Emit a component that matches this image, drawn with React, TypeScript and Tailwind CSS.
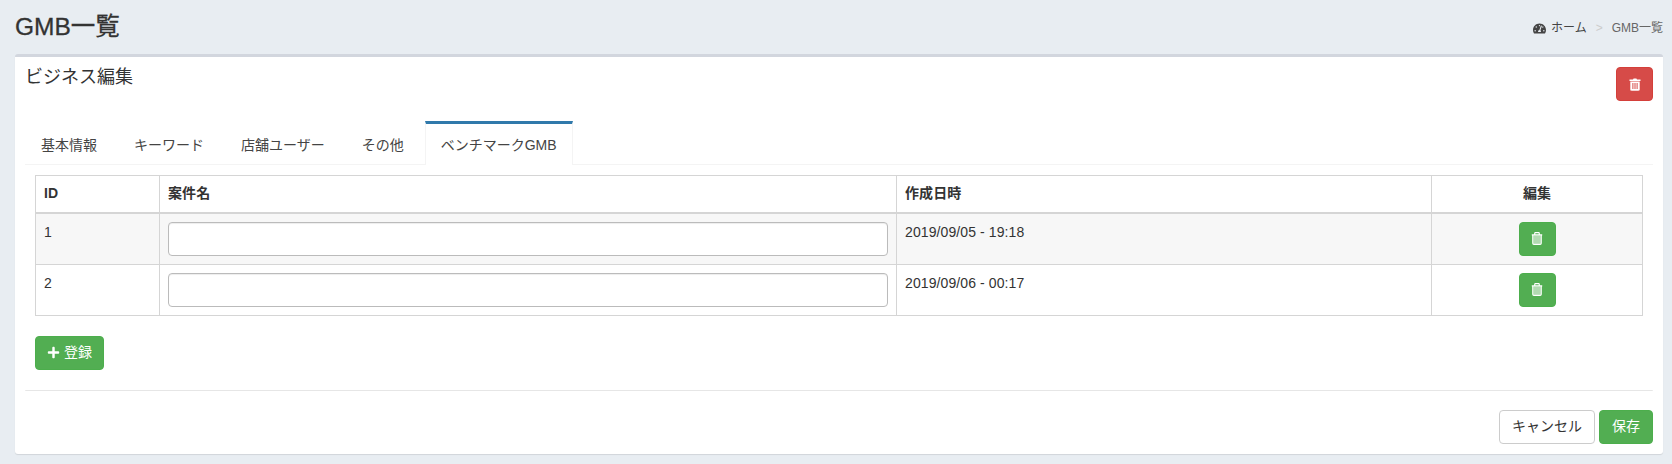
import React from "react";
import { FaPlus, FaTachometerAlt } from "react-icons/fa";

// solid trash used on the top delete button
const TrashSolid = () => (
  <svg width="12" height="13" viewBox="0 0 12 14" preserveAspectRatio="none" className="block">
    <path d="M4 1.6 4.6.5h2.8L8 1.6h3.5v1.5H.5V1.6z" fill="#fff" />
    <path fillRule="evenodd" d="M1.3 3.8h9.4v8.6c0 .8-.6 1.3-1.3 1.3H2.6c-.7 0-1.3-.5-1.3-1.3zM3.4 5.4v6.4h1V5.4zM5.5 5.4v6.4h1V5.4zM7.6 5.4v6.4h1V5.4z" fill="#fff" />
  </svg>
);

// outlined trash with translucent body used in the table rows
const TrashOutline = () => (
  <svg width="11" height="13" viewBox="0 0 10 12" className="block -translate-x-[0.5px]">
    <rect x="1.5" y="3" width="7" height="8" fill="#fff" fillOpacity="0.55" />
    <path d="M0 2.6h10M2.9 2.4V1.3c0-.4.3-.7.7-.7h2.8c.4 0 .7.3.7.7v1.1M1.1 2.8v7.6c0 .6.4 1 1 1h5.8c.6 0 1-.4 1-1V2.8" fill="none" stroke="#fff" strokeWidth="1.1" />
  </svg>
);

const rows = [
  { id: 1, date: "2019/09/05 - 19:18", bg: "bg-[#f7f7f7]" },
  { id: 2, date: "2019/09/06 - 00:17", bg: "bg-white" },
];

const tabs = ["基本情報", "キーワード", "店舗ユーザー", "その他"];

export default function App() {
  return (
    <div className="h-[464px] w-[1672px] overflow-hidden bg-[#e8edf2] text-[14px] text-[#333] font-['Liberation_Sans','Noto_Sans_CJK_JP',sans-serif]">
      {/* Header */}
      <div className="flex h-[54px] items-start justify-between pl-[15px] pr-[9px]">
        <h1 className="mt-[12px] text-[24.5px] leading-[30px] font-normal [-webkit-text-stroke:0.3px_#333]">GMB一覧</h1>
        <div className="mt-[19px] flex items-center text-[12px] leading-[18px]">
          <FaTachometerAlt size={13} className="mr-[5px] text-[#444]" />
          <span className="text-[#444]">ホーム</span>
          <span className="mx-[9px] text-[#ccc]">&gt;</span>
          <span className="text-[#666]">GMB一覧</span>
        </div>
      </div>

      {/* Box */}
      <div className="ml-[15px] h-[400px] w-[1648px] rounded-[3px] border-t-[3px] border-[#d2d6de] bg-white px-[10px] shadow-[0_1px_1px_rgba(0,0,0,0.1)]">
        <div className="flex items-start justify-between">
          <h3 className="mt-[7px] text-[18px] leading-[26px] font-normal">ビジネス編集</h3>
          <button className="mt-[10px] flex h-[34px] w-[37px] items-center justify-center rounded-[4px] border border-[#d43f3a] bg-[#d64b48]">
            <TrashSolid />
          </button>
        </div>

        {/* Tabs */}
        <div className="mt-[20px] flex h-[44px] border-b border-[#f4f4f4]">
          {tabs.map((t) => (
            <div key={t} className="mr-[5px] border-x border-transparent px-[15px] pt-[14px] text-[#444] leading-[20px]">
              {t}
            </div>
          ))}
          <div className="-mb-px border-x border-t-[3px] border-x-[#f4f4f4] border-t-[#3079ab] bg-white px-[15px] pt-[11px] text-[#444] leading-[20px]">
            ベンチマークGMB
          </div>
        </div>

        <div className="px-[10px] pt-[10px]">
          <table className="w-[1608px] table-fixed border-collapse tracking-[0.1px]">
            <thead>
              <tr className="h-[37px]">
                <th className="w-[124px] border border-b-2 border-[#d5d5d5] px-[8px] text-left font-bold">ID</th>
                <th className="w-[737px] border border-b-2 border-[#d5d5d5] px-[8px] text-left font-bold">案件名</th>
                <th className="w-[535px] border border-b-2 border-[#d5d5d5] px-[8px] text-left font-bold">作成日時</th>
                <th className="border border-b-2 border-[#d5d5d5] px-[8px] text-center font-bold">編集</th>
              </tr>
            </thead>
            <tbody>
              {rows.map((r) => (
                <tr key={r.id} className={r.bg}>
                  <td className="border border-[#d5d5d5] p-[8px] align-top leading-[20px]">{r.id}</td>
                  <td className="border border-[#d5d5d5] p-[8px] align-top">
                    <input className="block h-[34px] w-full rounded-[4px] border border-[#bbb] bg-white shadow-[inset_0_1px_1px_rgba(0,0,0,0.075)]" />
                  </td>
                  <td className="border border-[#d5d5d5] p-[8px] align-top leading-[20px]">{r.date}</td>
                  <td className="border border-[#d5d5d5] p-[8px] align-top">
                    <button className="mx-auto flex h-[34px] w-[37px] items-center justify-center rounded-[4px] border border-[#4cae4c] bg-[#52ae52]">
                      <TrashOutline />
                    </button>
                  </td>
                </tr>
              ))}
            </tbody>
          </table>

          <button className="mt-[20px] flex h-[34px] w-[69px] items-center justify-center gap-[4px] rounded-[4px] border border-[#4cae4c] bg-[#52ae52] text-white">
            <FaPlus size={13} />
            登録
          </button>
        </div>

        <div className="mt-[20px] h-px rounded-b-[3px] bg-[#e6e6e6]" />

        {/* Footer buttons */}
        <div className="mt-[19px] flex justify-end gap-[4px]">
          <button className="h-[34px] w-[96px] rounded-[4px] border border-[#ccc] bg-white text-[#333]">キャンセル</button>
          <button className="h-[34px] w-[54px] rounded-[4px] border border-[#4cae4c] bg-[#52ae52] text-white">保存</button>
        </div>
      </div>
    </div>
  );
}
